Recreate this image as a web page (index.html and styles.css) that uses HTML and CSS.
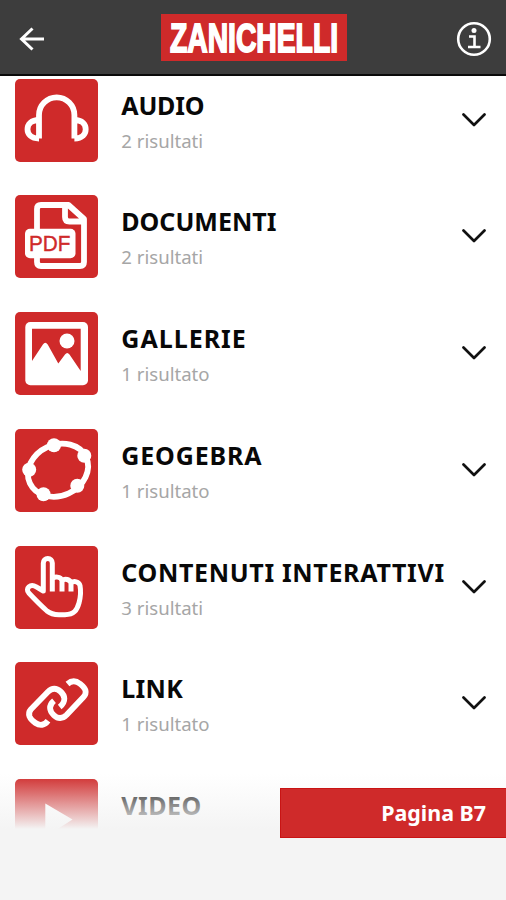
FILE: index.html
```html
<!DOCTYPE html>
<html lang="it">
<head>
<meta charset="utf-8">
<title>Zanichelli</title>
<link rel="stylesheet" href="styles.css">
</head>
<body>
<div class="app">
  <header class="topbar">
    <svg class="back" viewBox="0 0 26 26"><path d="M25 13H3M13.500 2.500 2.500 13l11 10.500"/></svg>
    <svg class="logo" viewBox="0 0 186 47"><text x="9" y="37.500" textLength="168" lengthAdjust="spacingAndGlyphs">ZANICHELLI</text></svg>
    <svg class="info" viewBox="0 0 36 36"><circle cx="18" cy="18" r="15.800"/><path d="M13 15.500h5.500V26M12 26h12.500"/><circle class="dot" cx="18" cy="9.500" r="2.500"/></svg>
  </header>
  <main class="list">
    <section class="row">
      <svg class="tile" viewBox="0 0 83 83"><path class="line" d="M24 59.500V36a17.700 17.700 0 0 1 35.400 0v23.500M24 59.500c-8 0-11.500-4.500-11.500-9.200S16 41 24 41M59.400 59.500c8 0 11.300-4.500 11.300-9.200S67.400 41 59.400 41"/></svg>
      <div class="label"><h2 class="audio">AUDIO</h2><p>2 risultati</p></div>
      <svg class="chevron" viewBox="0 0 24 14"><path d="m1.500 1.500 10.500 10.500 10.500-10.500"/></svg>
    </section>
    <section class="row">
      <svg class="tile" viewBox="0 0 83 83"><path class="line" d="M22 36V14q0-4 4-4h27.500L69 24v43q0 4-4 4H26q-4 0-4-4v-6M50 11v11q0 4.500 4.500 4.500H68"/><rect class="solid" x="10" y="33.700" width="50.500" height="29.600" rx="5"/><text class="pdf" x="14" y="56.300" textLength="41.500" lengthAdjust="spacingAndGlyphs">PDF</text></svg>
      <div class="label"><h2 class="documenti">DOCUMENTI</h2><p>2 risultati</p></div>
      <svg class="chevron" viewBox="0 0 24 14"><path d="m1.500 1.500 10.500 10.500 10.500-10.500"/></svg>
    </section>
    <section class="row">
      <svg class="tile" viewBox="0 0 83 83"><rect class="solid" x="10.300" y="10" width="62.700" height="63.300" rx="5"/><path class="cut" d="M17 16.700h48.700V59L54.500 42.500q-2.300-3-4.500 0l-6.700 9L32.700 32.500q-2.400-3.500-4.800 0L17 49z"/><circle class="solid" cx="52" cy="29" r="7.500"/></svg>
      <div class="label"><h2 class="gallerie">GALLERIE</h2><p>1 risultato</p></div>
      <svg class="chevron" viewBox="0 0 24 14"><path d="m1.500 1.500 10.500 10.500 10.500-10.500"/></svg>
    </section>
    <section class="row">
      <svg class="tile" viewBox="0 0 83 83"><ellipse class="line" cx="43" cy="41.200" rx="31" ry="25.500" transform="rotate(-25 43 41.200)"/><g class="solid"><circle cx="39" cy="16.300" r="7"/><circle cx="69.300" cy="26.700" r="7"/><circle cx="62.300" cy="56.700" r="7"/><circle cx="28.500" cy="65.300" r="7"/><circle cx="14.200" cy="40.700" r="7"/></g></svg>
      <div class="label"><h2 class="geogebra">GEOGEBRA</h2><p>1 risultato</p></div>
      <svg class="chevron" viewBox="0 0 24 14"><path d="m1.500 1.500 10.500 10.500 10.500-10.500"/></svg>
    </section>
    <section class="row">
      <svg class="tile" viewBox="0 0 83 83"><path class="line thin" d="M37.300 45.500V17a4.500 4.500 0 0 0-9 0v28l-7-4.200c-6-3.500-11.500 1.500-7.500 6.200C19 52.500 27 60.500 32 65q4.500 3.700 12 3.700h6c9 0 12-4.500 14-11.700 1.500-5.500 2-12 1-17.500-1-4-6-5-9-2.500v8.500M37.300 33c2-3 8.500-2.500 9.700 1.500v11M47 34.500c3-2.500 8-1 9 2.500"/></svg>
      <div class="label"><h2 class="contenuti">CONTENUTI INTERATTIVI</h2><p>3 risultati</p></div>
      <svg class="chevron" viewBox="0 0 24 14"><path d="m1.500 1.500 10.500 10.500 10.500-10.500"/></svg>
    </section>
    <section class="row">
      <svg class="tile" viewBox="0 0 83 83"><path class="line" d="M33 58.700c-3.500 4.800-8 5.300-12.500 2.300-2.500-1.700-5-4-6-6.500-1-2.800-.5-5 1.500-7.200l17-17.500c4-4 8.500-4 12.500-.3 4.500 4 6 10 -.8 15.500"/><path class="line" d="M52.500 22c4-3.500 8.500-3.300 12.500-.3 2.500 2 4.800 4 5.500 6.800.6 2.500-.1 4.500-2 6.500L51.500 53c-4 4-8.500 4-12.500.3-5-4.600-5.500-10 0-14.600"/></svg>
      <div class="label"><h2 class="link">LINK</h2><p>1 risultato</p></div>
      <svg class="chevron" viewBox="0 0 24 14"><path d="m1.500 1.500 10.500 10.500 10.500-10.500"/></svg>
    </section>
    <section class="row">
      <svg class="tile" viewBox="0 0 83 83"><path class="solid" d="M30.300 24.500 57.500 40.500 30.300 58z"/></svg>
      <div class="label"><h2 class="video">VIDEO</h2></div>
    </section>
  </main>
  <div class="fade"></div>
  <button class="page">Pagina B7</button>
</div>
</body>
</html>
```
FILE: styles.css
```css
* { box-sizing: border-box; }
body { margin: 0; background: #fff; font-family: "Noto Sans", sans-serif; }
svg { display: block; flex: none; }
.app { position: relative; width: 506px; height: 900px; overflow: hidden; }
.topbar { display: flex; align-items: center; justify-content: space-between; height: 76px; padding: 0 14px 0 19px; background: #3d3d3d; border-bottom: 2px solid #0a0a0a; }
.back { width: 26px; height: 26px; margin-top: 3px; fill: none; stroke: #fff; stroke-width: 3; }
.logo { width: 186px; height: 47px; margin: 1px 0 0 6px; background: #cf2a2a; overflow: visible; }
.logo text { font: bold 40px "Liberation Sans", sans-serif; fill: #fff; stroke: #fff; stroke-width: 1.8; }
.info { width: 36px; height: 36px; margin-top: 4px; fill: none; stroke: #fff; stroke-width: 2.6; }
.info .dot { fill: #fff; stroke: none; }
.list { display: flex; flex-direction: column; gap: 33.7px; padding: 2.800px 20px 0 15.300px; }
.row { display: flex; align-items: flex-start; height: 83px; flex: none; }
.tile { width: 83px; height: 83px; border-radius: 5px; background: #cf2a2a; }
.line { fill: none; stroke: #fff; stroke-width: 5.8; stroke-linejoin: round; }
.thin { stroke-width: 5; }
.solid { fill: #fff; }
.cut { fill: #cf2a2a; }
.pdf { font: 21.5px "Liberation Sans", sans-serif; fill: #cf2a2a; stroke: #cf2a2a; stroke-width: .4; }
.label { flex: 1; padding: 8px 0 0 23px; white-space: nowrap; }
h2 { margin: 0; font-size: 25px; line-height: 36px; font-weight: 700; color: #080808; }
.audio { letter-spacing: -.2px; }
.documenti { letter-spacing: 0; }
.gallerie { letter-spacing: 1px; }
.geogebra { letter-spacing: .85px; }
.contenuti { letter-spacing: .67px; }
.link { letter-spacing: .3px; }
.video { letter-spacing: .5px; }
p { margin: 4px 0 0; font-size: 18.6px; line-height: 28px; font-weight: 400; color: #a6a6a6; }
.chevron { width: 24px; height: 14px; margin-top: 34px; fill: none; stroke: #111; stroke-width: 2.7; stroke-linecap: round; stroke-linejoin: round; }
.fade { position: absolute; left: 0; right: 0; top: 774px; bottom: 0; background: linear-gradient(rgba(244,244,244,0), rgba(244,244,244,.92) 51px, #f4f4f4 55px); }
.page { position: absolute; right: 0; top: 788px; width: 226px; height: 49.500px; padding: 0 20px 0 0; border: 1px solid #c91414; border-right: 0; background: #cf2a2a; color: #fff; text-align: right; font: bold 21.4px "Noto Sans", sans-serif; }
```
